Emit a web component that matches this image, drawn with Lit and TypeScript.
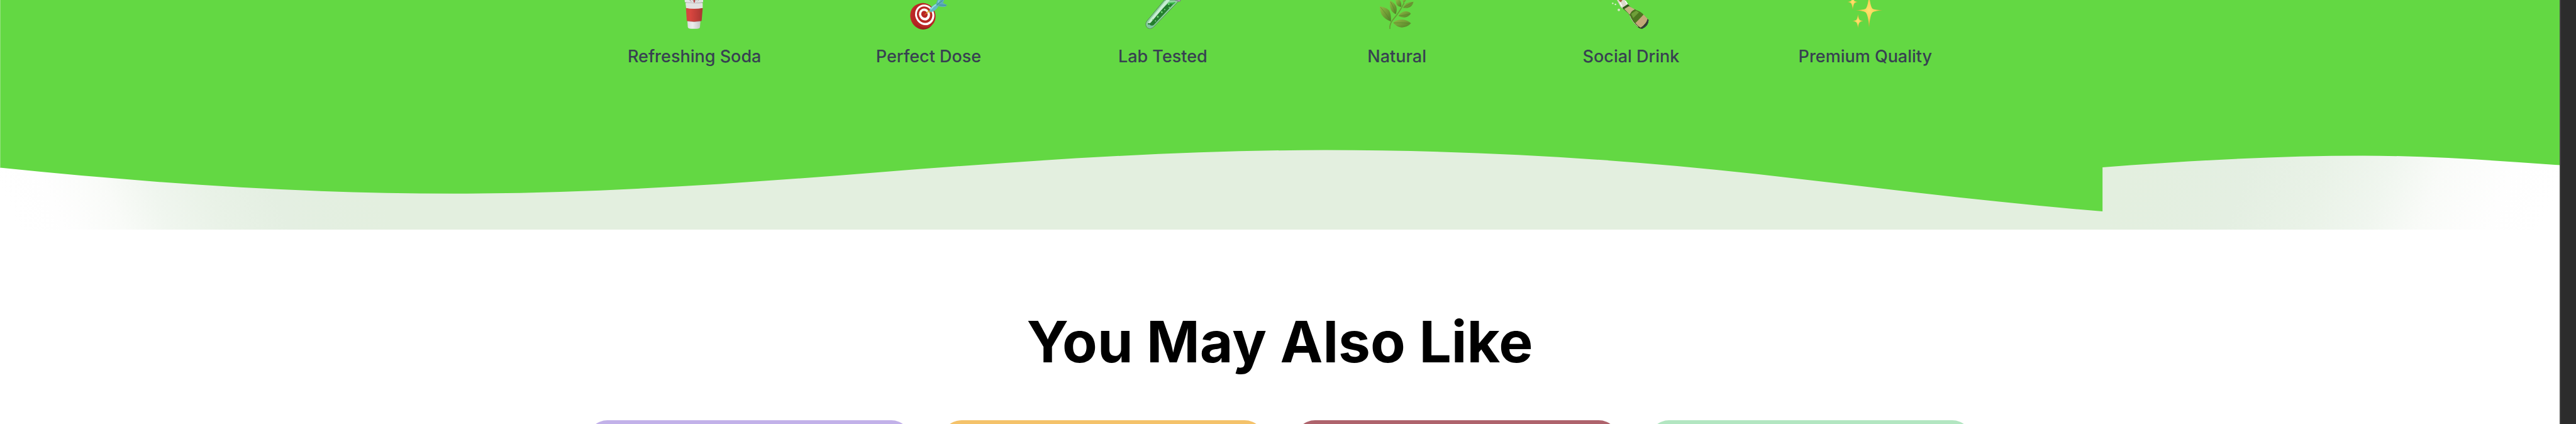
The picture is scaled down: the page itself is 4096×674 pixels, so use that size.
import { LitElement, html, css, svg } from "lit";
import { customElement } from "lit/decorators.js";

const soda = svg`
  <defs>
    <linearGradient id="s1"><stop offset="0" stop-color="#d9d9d9"/><stop offset=".4" stop-color="#ececec"/><stop offset="1" stop-color="#bdbdbd"/></linearGradient>
    <linearGradient id="s2"><stop offset="0" stop-color="#cf4840"/><stop offset=".25" stop-color="#d9463f"/><stop offset="1" stop-color="#a83632"/></linearGradient>
  </defs>
  <path d="M57 8 L65 129 Q66 137 80 137 H108 Q122 137 123 129 L133 8Z" fill="url(#s1)"/>
  <path d="M56 38 Q94 44 136 38 L131 99 Q94 106 60 99Z" fill="url(#s2)"/>
  <path d="M62 100 Q94 107 129 100" stroke="#8b2c2a" stroke-width="1.5" fill="none"/>
  <path d="M50 0 H138 V11 Q94 19 51 11Z" fill="#e3e3e3"/>
  <path d="M54 14 Q94 21 136 14 V38 Q94 44 57 38Z" fill="#e2e2e1"/>
  <path d="M51 11 Q94 19 137 11" stroke="#a5a5a5" stroke-width="2" fill="none"/>
  <path d="M72 0 Q74 9 94 9 Q116 9 118 0" fill="#b5b5b5"/>
  <path d="M80 0 Q84 6 90 6 M102 6 Q110 5 112 0" stroke="#f4f4f4" stroke-width="4" fill="none"/>
  <path d="M92 0 h7 l-1 13 h-4z" fill="#c03b3a"/>`;

const dart = svg`
  <defs><linearGradient id="d1" x1="0" y1="0" x2="1" y2="1"><stop offset="0" stop-color="#cf302c"/><stop offset="1" stop-color="#7c1412"/></linearGradient></defs>
  <ellipse cx="67" cy="79" rx="56" ry="63" transform="rotate(-24 67 79)" fill="url(#d1)"/>
  <g transform="rotate(-24 79 71)">
    <ellipse cx="76" cy="72" rx="53" ry="60" fill="#b92624"/>
    <ellipse cx="79" cy="71" rx="45" ry="50" fill="#fff"/>
    <ellipse cx="79" cy="70" rx="36" ry="40" fill="#b92624"/>
    <ellipse cx="79" cy="69" rx="26" ry="29" fill="#fff"/>
    <ellipse cx="79" cy="68" rx="15" ry="17" fill="#b92624"/>
  </g>
  <path d="M78 71 L96 52 L92 47 L102 54 L110 60 L96 58Z" fill="#e5b32d" stroke="#d59b21"/>
  <path d="M101 53 Q103 32 132 18 L144 30 Q134 50 110 58Z" fill="#62b9c5"/>
  <path d="M108 45 Q118 30 136 20" stroke="#a1dfe5" stroke-width="5" fill="none"/>
  <path d="M132 20 L140 0 H172 L166 14 L186 24 Q180 35 163 33 L144 30Z" fill="#5cadb9"/>
  <path d="M136 25 L164 2 M148 24 L182 25" stroke="#3a8592" stroke-width="3"/>
  <path d="M143 12 L149 0" stroke="#8bd0d8" stroke-width="5"/>`;

const tube = svg`
  <path d="M104 0 L21 99 Q9 115 20 130 Q34 143 50 130 L170 6 L164 0Z" fill="#8fd6a0" stroke="#577f61" stroke-width="3"/>
  <path d="M122 14 L154 11 L50 122 Q40 132 28 125 Q20 114 29 103Z" fill="#247f2e"/>
  <path d="M122 14 L158 10 L147 21 Q130 17 118 19Z" fill="#37b546"/>
  <path d="M112 0 L130 0 L38 108 Q30 114 24 108Z" fill="#c9ecd3"/>
  <path d="M21 118 Q22 133 36 133 Q48 131 54 119 Q40 126 32 116Z" fill="#7bc6a0"/>
  <path d="M154 0 L174 8 Q181 6 180 0Z" fill="#b9abc0" stroke="#695e72" stroke-width="2"/>
  <g fill="#77dc7b"><circle cx="124" cy="20" r="4"/><circle cx="127" cy="35" r="3"/><circle cx="105" cy="46" r="3"/><circle cx="91" cy="58" r="4"/><circle cx="72" cy="80" r="4"/><circle cx="61" cy="100" r="3"/><circle cx="47" cy="94" r="3"/></g>`;

const herb = svg`
  <defs><linearGradient id="h1" x1="0" y1="0" x2="1" y2="1"><stop offset="0" stop-color="#91bb45"/><stop offset="1" stop-color="#517f27"/></linearGradient></defs>
  <path d="M63 138 Q60 114 80 91 Q108 60 131 14" stroke="#699b35" stroke-width="5" fill="none"/>
  <g fill="url(#h1)">
    <path d="M15 30 Q54 37 62 55 Q70 74 68 103 Q37 91 24 70 Q15 53 15 30Z"/>
    <path d="M64 2 Q89 16 94 34 Q98 52 91 68 Q73 60 67 43 Q60 25 64 2Z"/>
    <path d="M90 0 H110 Q120 12 117 33 Q99 31 94 18Z"/>
    <path d="M124 0 H140 Q135 11 127 14Z"/>
    <path d="M126 37 Q136 9 176 8 Q171 31 151 37 Q138 40 126 37Z"/>
    <path d="M103 76 Q118 53 141 53 Q159 56 163 65 Q152 81 131 83 Q115 83 103 76Z"/>
    <path d="M78 108 Q95 93 122 93 Q148 96 164 111 Q146 130 120 131 Q96 130 78 108Z"/>
  </g>
  <g stroke="#55822b" stroke-width="2" fill="none"><path d="M18 34 Q44 63 67 100"/><path d="M66 8 Q82 35 91 65"/><path d="M81 109 Q120 107 158 111"/><path d="M107 75 Q136 73 160 66"/><path d="M128 36 Q150 23 171 12"/></g>`;

const bottle = svg`
  <path d="M30 0 H68 L84 24 L58 42 Q46 34 40 18Z" fill="#dcd9ca"/>
  <path d="M38 0 L48 12 L56 0Z" fill="#a8663d"/>
  <path d="M70 4 L80 20 M44 10 L54 30" stroke="#fff" stroke-width="5"/>
  <circle cx="39" cy="47" r="6" fill="#d7e5c4"/><circle cx="10" cy="16" r="4" fill="#cde5bb"/><circle cx="23" cy="21" r="4" fill="#d9ead0"/>
  <path d="M56 38 L82 20 L101 40 Q128 48 145 65 Q168 80 181 95 Q180 124 151 137 Q139 139 130 130 Q96 96 87 66Z" fill="#2c421b"/>
  <path d="M57 36 L80 22 L87 32 L63 46Z" fill="#365c1c"/>
  <path d="M65 43 L88 29 L116 45 Q98 52 92 71Z" fill="#c6b282"/>
  <path d="M93 70 Q100 53 117 46 Q145 55 157 70 L119 112 Q96 88 93 70Z" fill="#4d7720"/>
  <path d="M98 66 L122 50 L135 59 L108 86Z" fill="#6f9e38"/>
  <path d="M157 70 L176 89 Q172 112 143 132 Q128 123 118 110Z" fill="#c2a878"/>
  <path d="M178 94 Q178 123 148 134" stroke="#343d43" stroke-width="7" fill="none"/>
  <path d="M91 73 Q101 102 131 128" stroke="#d2d5ad" stroke-width="3" fill="none"/>`;

const sparkles = svg`
  <defs><radialGradient id="p1"><stop offset="0" stop-color="#ffe36c"/><stop offset=".5" stop-color="#f8d158"/><stop offset="1" stop-color="#e99b35"/></radialGradient></defs>
  <g fill="url(#p1)">
    <path d="M114 -32 Q119 35 132 43 Q145 48 178 49 Q145 52 132 58 Q119 66 114 131 Q109 66 96 58 Q83 52 50 49 Q83 48 96 43 Q109 35 114 -32Z"/>
    <path d="M36 -30 Q38 1 45 5 Q51 8 60 9 Q51 11 45 14 Q39 19 36 46 Q33 19 27 14 Q21 11 11 9 Q21 8 27 5 Q34 1 36 -30Z"/>
    <path d="M61 67 Q64 92 70 96 Q76 99 87 100 Q76 102 70 106 Q64 110 61 134 Q58 110 52 106 Q46 102 34 100 Q46 99 52 96 Q58 92 61 67Z"/>
  </g>`;

const features = [
  { label: "Refreshing Soda", icon: soda },
  { label: "Perfect Dose", icon: dart },
  { label: "Lab Tested", icon: tube },
  { label: "Natural", icon: herb },
  { label: "Social Drink", icon: bottle },
  { label: "Premium Quality", icon: sparkles },
];

const fadeStops = () => svg`
  <stop offset="0" stop-color="#fff"/>
  <stop offset=".12" stop-color="#fefefe"/>
  <stop offset=".28" stop-color="#f9fbf8"/>
  <stop offset=".4" stop-color="#f0f6ef"/>
  <stop offset=".55" stop-color="#e9f2e7"/>
  <stop offset=".72" stop-color="#e4efe2"/>
  <stop offset="1" stop-color="#e3efdf"/>`;

@customElement("app-root")
export class AppRoot extends LitElement {
  static styles = css`
    :host {
      display: grid;
      grid-template-columns: minmax(0, 1fr) 26px;
      height: 100vh;
      overflow: hidden;
      background: #fff;
      font-family: Inter, "Liberation Sans", sans-serif;
    }
    .page { overflow: hidden; }
    .features { background: #63d843; padding: 0 32px 125px; box-shadow: inset 1px 0 #92e27b; }
    .list {
      list-style: none;
      margin: 0 auto;
      padding: 0;
      max-width: 2170px;
      display: grid;
      grid-template-columns: repeat(6, minmax(0, 1fr));
      gap: 64px;
    }
    .feature { display: flex; flex-direction: column; align-items: center; gap: 22px; }
    .icon { display: block; width: 64px; height: 48px; }
    .label { font-size: 27px; line-height: 40px; font-weight: 500; color: #374151; white-space: nowrap; }
    .wave { display: block; width: 100%; height: 130px; }
    .related { padding: 124px 32px 0; }
    .title { margin: 0; text-align: center; font-size: 91px; line-height: 108px; font-weight: 700; color: #000; }
    .cards {
      max-width: 2202px;
      margin: 71px auto 0;
      display: grid;
      grid-template-columns: repeat(4, minmax(0, 1fr));
      gap: 48px;
    }
    .card { height: 640px; border-radius: 32px; }
    .lilac { background: #c2b1e9; }
    .amber { background: #f4c26a; }
    .berry { background: #ae636c; }
    .mint { background: #b2e6c1; }
    .rail { background: #2c2c2c; border-left: 2px solid #414141; }
  `;

  render() {
    return html`
      <main class="page">
        <section class="features">
          <ul class="list">
            ${features.map(
              (f) => html`<li class="feature">
                <svg class="icon" viewBox="0 0 192 144" aria-hidden="true">${f.icon}</svg>
                <span class="label">${f.label}</span>
              </li>`
            )}
          </ul>
        </section>
        <svg class="wave" viewBox="0 236 4082 130" preserveAspectRatio="none" aria-hidden="true">
          <defs>
            <linearGradient id="fadeL" gradientUnits="userSpaceOnUse" x1="30" y1="366" x2="542" y2="154">
              ${fadeStops()}
            </linearGradient>
            <linearGradient id="fadeR" gradientUnits="userSpaceOnUse" x1="4052" y1="366" x2="3452" y2="118">
              ${fadeStops()}
            </linearGradient>
          </defs>
          <rect x="0" y="236" width="2000" height="130" fill="url(#fadeL)"/>
          <rect x="1999" y="236" width="2083" height="130" fill="url(#fadeR)"/>
          <path fill="#63d843" d="M0 230 V267.6 C250 293 482 308.7 723 308.7 C955 308.7 1180 292.2 1400 275 C1640 256.3 1876 239.6 2114 239.6 C2345 239.6 2570 252.3 2800 277.6 C2985 298.5 3170 322 3353 337 V267 C3490 256.5 3630 248.5 3768 248.5 C3872 248.5 3977 256 4082 263.5 V230Z"/>
          <rect x="0" y="236" width="1" height="31" fill="#92e27b"/>
        </svg>
        <section class="related">
          <h2 class="title">You May Also Like</h2>
          <div class="cards">
            <article class="card lilac"></article>
            <article class="card amber"></article>
            <article class="card berry"></article>
            <article class="card mint"></article>
          </div>
        </section>
      </main>
      <aside class="rail"></aside>
    `;
  }
}
